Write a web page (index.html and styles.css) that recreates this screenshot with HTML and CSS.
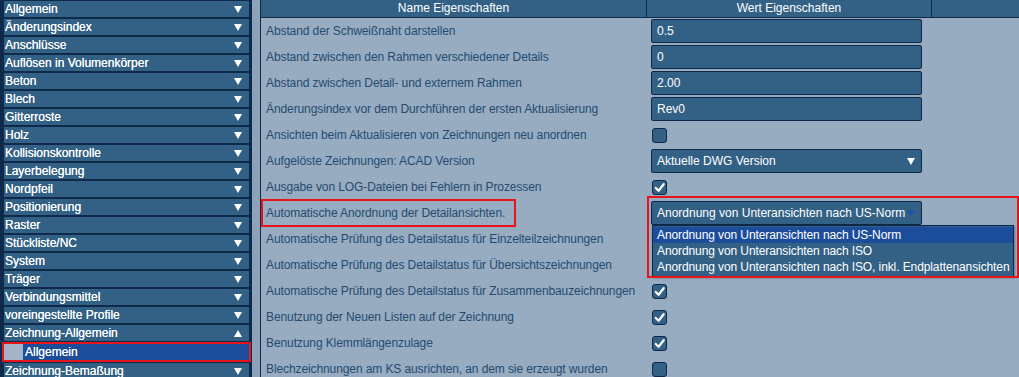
FILE: index.html
```html
<!DOCTYPE html>
<html lang="de">
<head>
  <meta charset="UTF-8" />
  <title>Zeichnungseinstellungen</title>
  <link rel="stylesheet" href="styles.css">
</head>
<body>
<div class="app">

  <!-- ========== Kategorien ========== -->
  <div class="sidebar">
    <div class="cat">Allgemein <i class="arr"></i></div>
    <div class="cat">Änderungsindex <i class="arr"></i></div>
    <div class="cat">Anschlüsse <i class="arr"></i></div>
    <div class="cat">Auflösen in Volumenkörper <i class="arr"></i></div>
    <div class="cat">Beton <i class="arr"></i></div>
    <div class="cat">Blech <i class="arr"></i></div>
    <div class="cat">Gitterroste <i class="arr"></i></div>
    <div class="cat">Holz <i class="arr"></i></div>
    <div class="cat">Kollisionskontrolle <i class="arr"></i></div>
    <div class="cat">Layerbelegung <i class="arr"></i></div>
    <div class="cat">Nordpfeil <i class="arr"></i></div>
    <div class="cat">Positionierung <i class="arr"></i></div>
    <div class="cat">Raster <i class="arr"></i></div>
    <div class="cat">Stückliste/NC <i class="arr"></i></div>
    <div class="cat">System <i class="arr"></i></div>
    <div class="cat">Träger <i class="arr"></i></div>
    <div class="cat">Verbindungsmittel <i class="arr"></i></div>
    <div class="cat">voreingestellte Profile <i class="arr"></i></div>
    <div class="cat">Zeichnung-Allgemein <i class="arr up"></i></div>
    <div class="sub"><span class="sub-box"></span><span class="sub-txt">Allgemein</span></div>
    <div class="cat">Zeichnung-Bemaßung <i class="arr"></i></div>
  </div>

  <div class="splitter"></div>

  <!-- ========== Eigenschaften ========== -->
  <div class="main">
    <div class="head">
      <div class="h-name">Name Eigenschaften</div>
      <div class="h-val">Wert Eigenschaften</div>
      <div class="h-rest"></div>
    </div>

    <div class="row"><div class="name">Abstand der Schweißnaht darstellen</div><div class="val"><div class="box">0.5</div></div></div>
    <div class="row"><div class="name">Abstand zwischen den Rahmen verschiedener Details</div><div class="val"><div class="box">0</div></div></div>
    <div class="row"><div class="name">Abstand zwischen Detail- und externem Rahmen</div><div class="val"><div class="box">2.00</div></div></div>
    <div class="row"><div class="name">Änderungsindex vor dem Durchführen der ersten Aktualisierung</div><div class="val"><div class="box">Rev0</div></div></div>
    <div class="row"><div class="name">Ansichten beim Aktualisieren von Zeichnungen neu anordnen</div><div class="val"><span class="chk"></span></div></div>
    <div class="row"><div class="name">Aufgelöste Zeichnungen: ACAD Version</div><div class="val"><div class="box sel">Aktuelle DWG Version<i class="arr"></i></div></div></div>
    <div class="row"><div class="name">Ausgabe von LOG-Dateien bei Fehlern in Prozessen</div><div class="val"><span class="chk on"><svg viewBox="0 0 14 14"><path d="M3 7.5 L6 10.5 L11.5 3.5"/></svg></span></div></div>
    <div class="row"><div class="name"><span class="mark">Automatische Anordnung der Detailansichten.</span></div><div class="val"><div class="box sel open">Anordnung von Unteransichten nach US-Norm<i class="arr"></i></div></div></div>
    <div class="row"><div class="name">Automatische Prüfung des Detailstatus für Einzelteilzeichnungen</div><div class="val"></div></div>
    <div class="row"><div class="name">Automatische Prüfung des Detailstatus für Übersichtszeichnungen</div><div class="val"></div></div>
    <div class="row"><div class="name">Automatische Prüfung des Detailstatus für Zusammenbauzeichnungen</div><div class="val"><span class="chk on"><svg viewBox="0 0 14 14"><path d="M3 7.5 L6 10.5 L11.5 3.5"/></svg></span></div></div>
    <div class="row"><div class="name">Benutzung der Neuen Listen auf der Zeichnung</div><div class="val"><span class="chk on"><svg viewBox="0 0 14 14"><path d="M3 7.5 L6 10.5 L11.5 3.5"/></svg></span></div></div>
    <div class="row"><div class="name">Benutzung Klemmlängenzulage</div><div class="val"><span class="chk on"><svg viewBox="0 0 14 14"><path d="M3 7.5 L6 10.5 L11.5 3.5"/></svg></span></div></div>
    <div class="row"><div class="name">Blechzeichnungen am KS ausrichten, an dem sie erzeugt wurden</div><div class="val"><span class="chk"></span></div></div>

    <!-- geöffnete Auswahlliste -->
    <div class="popup">
      <div class="opt active">Anordnung von Unteransichten nach US-Norm</div>
      <div class="opt">Anordnung von Unteransichten nach ISO</div>
      <div class="opt">Anordnung von Unteransichten nach ISO, inkl. Endplattenansichten</div>
    </div>
    <div class="mark-pop"></div>
  </div>
</div>
</body>
</html>
```
FILE: styles.css
```css
:root{
  --dunkel:#0e2949; --blau:#336186; --aktiv:#1c4d9b;
  --panel:#97abc1; --text:#244b6f; --rot:#e8141b;
}
body{margin:0;font-family:"Liberation Sans", Arial, sans-serif;font-size:12px;background:var(--panel);overflow:hidden}
.app{display:flex;height:377px}

/* ---------- Kategorien ---------- */
.sidebar{
  width:245px;padding:1px 3px 0 4px;background:var(--dunkel);
  display:flex;flex-direction:column;gap:2px;
}
.cat{
  height:16px;line-height:16px;background:var(--blau);color:#fff;
  display:flex;align-items:center;justify-content:space-between;padding:0 7px 0 1px;flex:none;
  text-shadow:0 0 .4px #fff;
}
.arr{
  width:0;height:0;border-left:4px solid transparent;border-right:4px solid transparent;
  border-top:7px solid #fff;
}
.arr.up{border-top:none;border-bottom:7px solid #fff}
.sub{height:16px;display:flex;outline:2px solid var(--rot);flex:none;margin-top:1px;margin-bottom:1px}
.sub-box{width:19px;background:#a3b2c6}
.sub-txt{flex:1;background:var(--aktiv);color:#fff;line-height:16px;padding-left:2px;text-shadow:0 0 .4px #fff}

.splitter{width:8px;background:#8ea3b9;border-right:1px solid var(--dunkel)}

/* ---------- Eigenschaften ---------- */
.main{flex:1;position:relative}
.head{display:flex;height:17px;background:var(--blau);border-bottom:1px solid var(--dunkel);color:#fff;line-height:17px}
.h-name{width:385px;text-align:center;border-right:1px solid var(--dunkel)}
.h-val{width:284px;text-align:center;border-right:1px solid var(--dunkel)}
.h-rest{flex:1}

.row{display:flex;height:26px;align-items:center}
.name{width:381px;padding-left:5px;color:var(--text);letter-spacing:-.1px;white-space:nowrap}
.val{padding-left:4px;display:flex;align-items:center}
.box{
  width:264px;height:22px;line-height:22px;padding-left:5px;border:1px solid var(--dunkel);border-radius:2px;
  background:var(--blau);color:#fff;position:relative;white-space:nowrap;
}
.sel .arr{position:absolute;right:6px;top:8px}
.sel.open .arr{border-top-color:#1d56b0}

.chk{
  width:13px;height:13px;border:1px solid var(--dunkel);border-radius:3px;background:var(--blau);
  display:inline-block;margin-left:1px;
}
.chk svg{width:13px;height:13px;display:block}
.chk path{fill:none;stroke:#fff;stroke-width:2.4;stroke-linecap:round;stroke-linejoin:round}

.mark{display:inline-block;border:2px solid var(--rot);margin-left:-5px;padding:4px 9px 4px 3px;line-height:16px}

/* ---------- Auswahlliste ---------- */
.popup{
  position:absolute;left:391px;top:225px;width:360px;border:1px solid var(--dunkel);
  background:var(--blau);box-shadow:1px 1px 2px rgba(0,0,0,.3);padding:1px 0;
}
.opt{height:16px;line-height:16px;color:#fff;padding-left:4px;white-space:nowrap;overflow:hidden;letter-spacing:-.1px}
.opt.active{background:var(--aktiv)}
.mark-pop{
  position:absolute;left:386px;top:196px;width:372px;height:82px;box-sizing:border-box;
  border:2px solid var(--rot);pointer-events:none;
}
```
